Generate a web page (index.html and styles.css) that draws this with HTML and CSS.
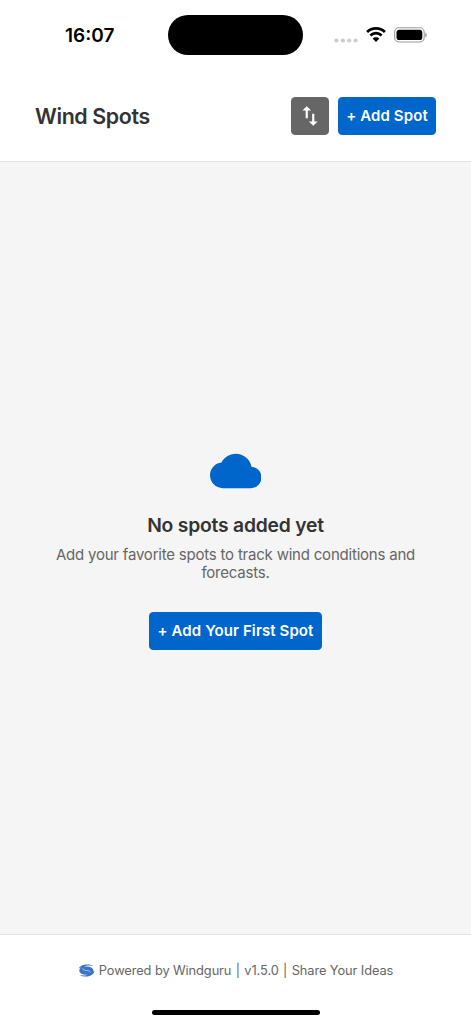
FILE: index.html
```
<!DOCTYPE html>
<html lang="en">
<head>
<meta charset="utf-8">
<title>Wind Spots</title>
<link rel="stylesheet" href="styles.css">
</head>
<body>
<div class="screen">
  <div class="status">
    <span class="time">16:07</span>
    <span class="island"></span>
    <div class="indicators">
      <svg class="dots" width="24" height="5" viewBox="0 0 24 5"><circle cx="2.4" cy="2.5" r="2.1"/><circle cx="8.9" cy="2.5" r="2.1"/><circle cx="15.2" cy="2.5" r="2.1"/><circle cx="21.6" cy="2.5" r="2.1"/></svg>
      <svg class="wifi" width="20" height="15" viewBox="0 0 20 15"><path d="M1.1 5.1A12.6 12.6 0 0 1 18.9 5.1M4.4 8.5A8 8 0 0 1 15.600 8.5"/><path class="solid" d="M6.600 11.600A4.900 4.900 0 0 1 13.400 11.600L10 15Z"/></svg>
      <svg class="battery" width="33" height="16" viewBox="0 0 33 16"><rect class="case" x=".6" y=".8" width="29.6" height="14.2" rx="4.4"/><rect x="2.5" y="2.7" width="25.8" height="10.4" rx="2.9"/><path class="cap" d="M31.3 5.6Q32.8 6.3 32.8 7.9T31.3 10.2Z"/></svg>
    </div>
  </div>
  <header class="header">
    <h1 class="title">Wind Spots</h1>
    <div class="actions">
      <button class="btn sort" aria-label="Sort"><svg width="26" height="26" viewBox="0 0 24 24"><path d="M16 17.01V10h-2v7.01h-3L15 21l4-3.99h-3zM9 3 5 6.99h3V14h2V6.99h3L9 3z"/></svg></button>
      <button class="btn add"><span>+ Add Spot</span></button>
    </div>
  </header>
  <main class="empty">
    <svg class="cloud" width="51.5" height="52" viewBox="0 0 24 24"><path d="M19.35 10.04C18.67 6.59 15.64 4 12 4 9.11 4 6.6 5.64 5.35 8.04 2.34 8.36 0 10.91 0 14c0 3.31 2.69 6 6 6h13c2.76 0 5-2.24 5-5 0-2.64-2.05-4.78-4.65-4.96z"/></svg>
    <h2 class="heading">No spots added yet</h2>
    <p class="text">Add your favorite spots to track wind conditions and<br>forecasts.</p>
    <button class="btn first"><span>+ Add Your First Spot</span></button>
  </main>
  <footer class="footer">
    <div class="credits">
      <svg class="logo" width="17" height="13" viewBox="0 0 17 13"><path d="M.4 4.900C1.600 1.800 5.500.4 9.200.4c2.900 0 5.100.6 6.500 1.700C12.500 1.300 8.500 1.400 6.200 2.600c4.500-.8 9.300.7 9.300 4.200 0 .6-.1 1-.3 1.400l1.300-1.600C16.300 10.200 12.800 12.600 8.300 12.600c-2.800 0-5.100-.6-6.600-1.600 2.800.7 6.300.6 8.600-.4C5.800 11.400 1.300 10 1.300 6.600c0-1.300.6-2.300 1.600-3.200C1.800 3.700 1 4.200.4 4.900Z"/><path class="swirl" d="M4.700 4.300c-.3 1.500 1.800 2 4.300 2.200 2.300.2 3.500.900 3.200 2"/></svg>
      <span class="powered">Powered by Windguru</span><span class="bar">|</span><span class="version">v1.5.0</span><span class="bar">|</span><span class="share">Share Your Ideas</span>
    </div>
    <span class="home"></span>
  </footer>
</div>
</body>
</html>
```
FILE: styles.css
```
* { box-sizing: border-box; }
body { margin: 0; font-family: Inter, "Liberation Sans", sans-serif; background: #fff; }
svg { display: block; flex: none; }
span { white-space: nowrap; }
.screen { width: 471px; height: 1024px; display: flex; flex-direction: column; overflow: hidden; }
.status { height: 70px; flex: none; display: grid; grid-template-columns: 168px 135px 1fr; }
.time { padding: 24px 0 0 65px; font-size: 19px; line-height: 24px; font-weight: 600; color: #000; }
.island { height: 40px; margin-top: 15px; border-radius: 20px; background: #000; }
.indicators { display: flex; align-items: flex-start; padding-left: 31px; }
.dots { margin-top: 38px; fill: #ccc; }
.wifi { margin: 27px 0 0 8px; fill: none; stroke: #000; stroke-width: 2.8; }
.wifi .solid { fill: #000; stroke: none; }
.battery { margin: 27px 0 0 8px; fill: #000; }
.battery .case { fill: none; stroke: #999; stroke-width: 1.1; }
.battery .cap { fill: #999; }
.header { height: 92px; flex: none; padding: 0 35px; display: flex; justify-content: space-between; align-items: center; border-bottom: 1.5px solid #e0e0e0; }
.title { margin: 0; font-size: 21.4px; line-height: 28px; font-weight: 600; letter-spacing: -.38px; color: #333; }
.actions { display: flex; gap: 9px; }
.btn { border: 0; padding: 0; border-radius: 4.3px; height: 38px; display: flex; align-items: center; justify-content: center; background: #0066cc; color: #fff; font: 600 15px/20px Inter, "Liberation Sans", sans-serif; letter-spacing: .1px; }
.sort { width: 38px; background: #666; fill: #fff; }
.add { width: 98px; }
.empty { flex: 1; background: #f5f5f5; display: flex; flex-direction: column; align-items: center; padding-top: 283px; }
.cloud { fill: #0066cc; }
.heading { margin: 14px 0 0; font-size: 19.3px; line-height: 28px; font-weight: 600; letter-spacing: -.2px; color: #333; }
.text { margin: 7px 0 0; font-size: 15px; line-height: 18px; letter-spacing: -.21px; text-align: center; color: #666; white-space: nowrap; }
.first { margin-top: 30px; width: 173px; }
.footer { height: 90px; flex: none; border-top: 1.5px solid #e0e0e0; display: flex; flex-direction: column; align-items: center; justify-content: space-between; padding: 26px 0 9px; }
.credits { display: flex; align-items: center; font-size: 12.85px; line-height: 18px; letter-spacing: -.1px; color: #666; }
.credits span { padding-top: 1px; }
.logo { margin-right: 4px; fill: #3d73c6; }
.swirl { fill: none; stroke: #fff; stroke-width: .5; }
.bar { width: 13px; text-align: center; }
.home { width: 168px; height: 5px; border-radius: 3px; background: #000; }
```
